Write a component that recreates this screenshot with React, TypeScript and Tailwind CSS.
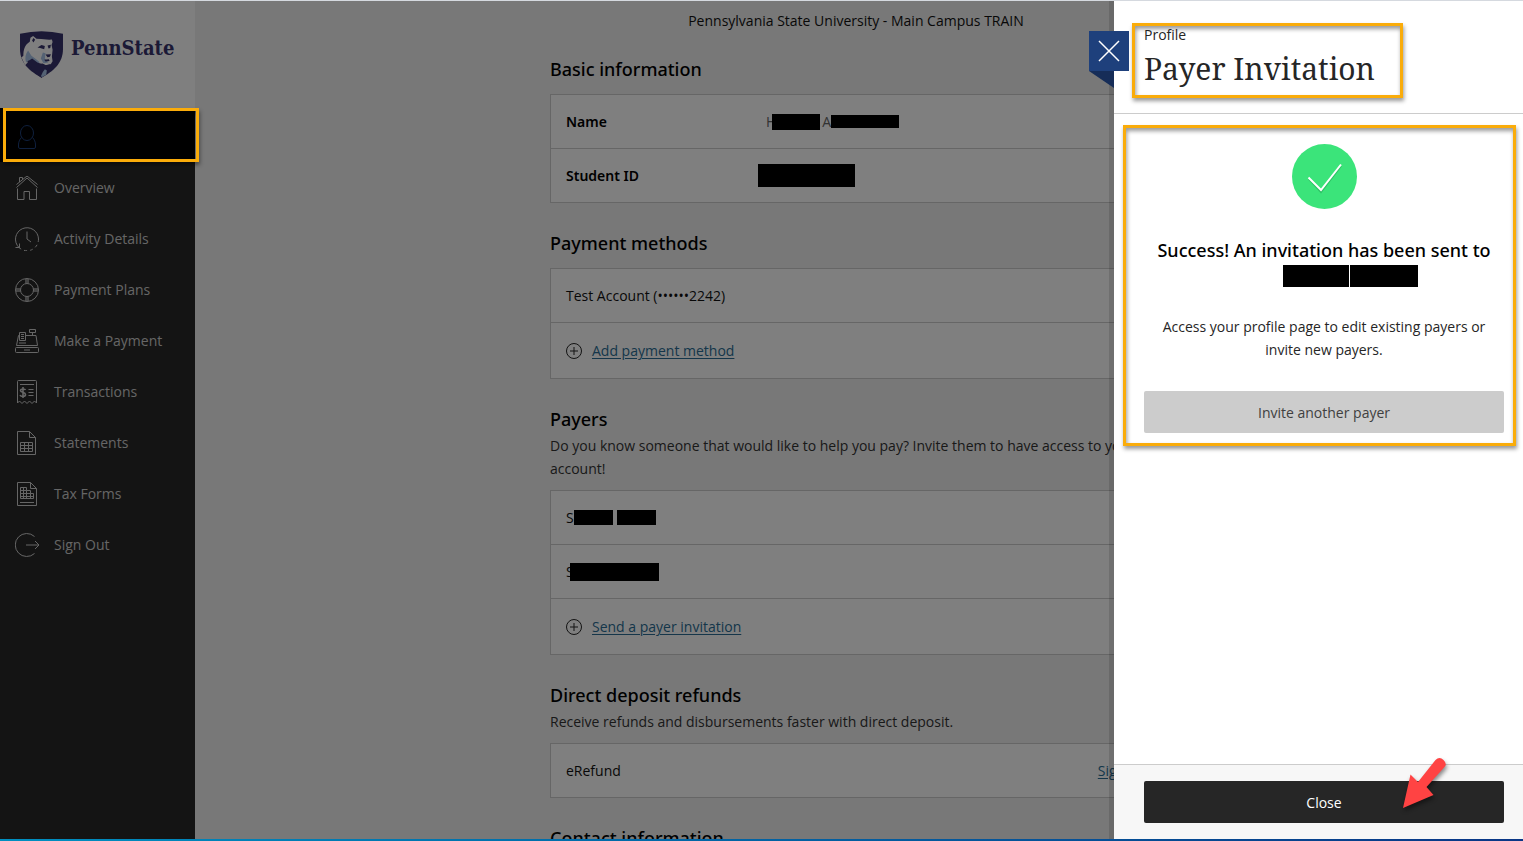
import type { ReactNode } from 'react';
import clsx from 'clsx';

const navItems = [
  { label: 'Overview', icon: <HomeIcon /> },
  { label: 'Activity Details', icon: <HistoryIcon /> },
  { label: 'Payment Plans', icon: <LifebuoyIcon /> },
  { label: 'Make a Payment', icon: <RegisterIcon /> },
  { label: 'Transactions', icon: <ReceiptIcon /> },
  { label: 'Statements', icon: <StatementIcon /> },
  { label: 'Tax Forms', icon: <TaxIcon /> },
  { label: 'Sign Out', icon: <SignOutIcon /> },
];

function Icon({ children, className }: { children: ReactNode; className?: string }) {
  return (
    <svg
      viewBox="0 0 24 24"
      className={clsx('size-6 shrink-0', className)}
      fill="none"
      stroke="currentColor"
      strokeWidth="1"
      aria-hidden="true"
    >
      {children}
    </svg>
  );
}

function UserIcon() {
  return (
    <Icon className="text-[#1e407c]">
      <ellipse cx="12" cy="8" rx="6.5" ry="7.5" />
      <path d="M6.5 12.5C4.500 14.500 3.500 17 3.500 20v2q0 1.500 1.500 1.500h14q1.500 0 1.500-1.500v-2c0-3-1-5.500-3-7.500" />
    </Icon>
  );
}

function HomeIcon() {
  return (
    <Icon>
      <path d="M2.500 12.500v11h6.500v-8h5.500v8h7v-11" />
      <path d="M1.500 11.500 12 2l10.500 9.500M1.500 8.500 12 0l10.500 8.500M4.500 6V1.500h3v2" />
    </Icon>
  );
}

function HistoryIcon() {
  return (
    <Icon>
      <path d="M4 20.500A11.500 11.500 0 1 1 23.500 12" />
      <path d="M23.500 12A11.500 11.500 0 0 1 4 20.500" strokeDasharray="3 3" />
      <path d="M.5 20.500h4v-4M12 4.500V12l4 3" />
    </Icon>
  );
}

function LifebuoyIcon() {
  return (
    <Icon>
      <circle cx="12" cy="12" r="11.5" />
      <circle cx="12" cy="12" r="6.5" />
      <path d="M12 1v4.500M12 18.500V23M1 12h4.500M18.500 12H23" strokeWidth="4" opacity="0.6" />
    </Icon>
  );
}

function RegisterIcon() {
  return (
    <Icon>
      <rect x=".5" y="18.500" width="23" height="5" rx="1" />
      <path d="M9 21h6M4 6.500H3.500L1.500 16.500h21l-1.500-10H11M4 14h7" />
      <path d="M4.500 11.500v-8h6v8zM6 5.500h3M6 7.500h3M6 9.500h3" />
      <path d="M14.500.5h6v3h-6zM17.500 3.500v3" />
    </Icon>
  );
}

function ReceiptIcon() {
  return (
    <Icon>
      <path d="M2.500 23V1.500q0-1 1-1h17q1 0 1 1V23l-2-2-2.500 2.500-2.500-2.500-2.500 2.500L9.500 21 7 23.500 4.500 21z" />
      <path d="M5 4.500h14M13.500 9.500h5M13.500 12.500h5M13.500 15.500h5" />
      <path d="M10.500 10C10 8.500 5.500 8.500 5.500 10.500s5 1.500 5 4-4.500 2.500-5.500.5M8 7v11" strokeWidth="1.6" />
    </Icon>
  );
}

function StatementIcon() {
  return (
    <Icon>
      <path d="M2.500.5h12l6 6v17h-18zM14.500.5v6h6" />
      <path d="M5.500 11.500h12v9h-12zM5.500 14.500h12M5.500 17.500h12M9.500 11.500v9M13.500 11.500v9" />
    </Icon>
  );
}

function TaxIcon() {
  return (
    <Icon>
      <path d="M2.500.5h13l6 6v17h-19zM15.500.5v6h6" />
      <path d="M5.500 5.500h6v3h4v3h3v5h-13zM5.500 8.500h6M5.500 11.500h10M5.500 14.500h13M8.500 5.500v11M11.500 8.500v8M15.500 11.500v5M5 20.500h14" />
    </Icon>
  );
}

function SignOutIcon() {
  return (
    <Icon>
      <path d="M19.500 3.500A11.500 11.500 0 1 0 19.500 20.500" />
      <path d="M11 12h12.500M20 8l4 4-4 4" />
    </Icon>
  );
}

function PennStateLogo() {
  return (
    <a href="#home" aria-label="PennState home" className="flex h-[107px] items-center gap-2 bg-white pl-5">
      <svg viewBox="0 0 128 140" className="h-[47px] w-[43px] shrink-0" aria-hidden="true">
        <path d="M0 8Q64-7 128 8v46c0 42-30 66-64 85C30 120 0 96 0 54z" fill="#36326c" />
        {/* lion */}
        <path d="M31 20l8-5 10 8 14 1 24 2 8-1 2 8-3 9 3 14-2 20 2 14-6 10-14 2-10-5-12 2-16-6-12-10-10 10-6-9c-3-22 1-42 18-52z" fill="#fff" />
        <path d="M4 78l9-6 10 22-8 8z" fill="#fff" />
        <path d="M24 58l10 16 14 10 10 8-2 8-18-8-12-4-8 6c-4-14-2-26 6-36zM68 64l8 2-2 16 10 12-14 2-8-14z" fill="#a8c4e8" />
        <path d="M24 90l12-8 16 12 24 8 16-4-8 20-20 21C44 126 30 110 24 90z" fill="#36326c" />
        <path d="M68 122l6-8 6 4-2 12-12 7-4-2z" fill="#a8c4e8" />
        <path d="M36 28l4-7 5 5-5 8zM52 49l12-7 10 3-2 9-12-3zM82 43l10-2-2 10-5 1zM76 70l16-1-3 8-7 1zM72 86l14-2 2 5-12 2z" fill="#36326c" />
      </svg>
      <span className="pb-3.5 font-['DejaVu_Serif_Condensed','DejaVu_Serif',serif] text-xl font-bold text-[#36326c]">
        PennState
      </span>
    </a>
  );
}

function Sidebar() {
  return (
    <nav className="w-[195px] shrink-0 bg-[#282828] text-[#cccccc]">
      <PennStateLogo />
      <a href="#profile" aria-label="Profile" className="flex h-[54px] items-center bg-black px-[15px] pt-1">
        <UserIcon />
      </a>
      <ul>
        {navItems.map((item) => (
          <li key={item.label}>
            <a href="#" className="flex h-[51px] items-center gap-[15px] px-[15px]">
              {item.icon}
              {item.label}
            </a>
          </li>
        ))}
      </ul>
    </nav>
  );
}

function Section({ title, description, children }: { title: string; description?: string; children?: ReactNode }) {
  return (
    <section>
      <h2 className="pb-0.5 font-['Noto_Sans',sans-serif] text-lg leading-[26px] font-medium text-black">{title}</h2>
      {description && <p>{description}</p>}
      {children && (
        <div className="mt-2.5 divide-y divide-[#cccccc] border border-[#cccccc] bg-white text-[#111111]">
          {children}
        </div>
      )}
    </section>
  );
}

function Row({ children }: { children: ReactNode }) {
  return <div className="flex items-center px-[15px] py-[15px]">{children}</div>;
}

function RowLabel({ children }: { children: ReactNode }) {
  return <span className="w-48 font-['Noto_Sans',sans-serif] font-semibold text-black">{children}</span>;
}

function AddLink({ children }: { children: ReactNode }) {
  return (
    <div className="flex items-center gap-2.5 px-[15px] py-4">
      <svg viewBox="0 0 16 16" className="size-4" fill="none" stroke="#262626" aria-hidden="true">
        <circle cx="8" cy="8" r="7.5" />
        <path d="M8 4v8M4 8h8" />
      </svg>
      <a href="#" className="text-[#2a6d94] underline underline-offset-2">
        {children}
      </a>
    </div>
  );
}

function ProfilePage() {
  return (
    <main className="min-w-0 flex-1 bg-[#f0f0f0] pt-2 pr-1.5 text-[#333333]">
      <div className="mx-auto max-w-[612px]">
        <p className="mb-6 text-center text-[#111111]">Pennsylvania State University - Main Campus TRAIN</p>
        <div className="flex flex-col gap-[27px]">
          <Section title="Basic information">
            <Row>
              <RowLabel>Name</RowLabel>
              <span className="flex items-center pl-2 text-[#666666]">
                H<span className="-ml-1 mr-0.5 h-4 w-12 bg-black" />A
                <span className="h-[13px] w-[68px] bg-black" />
              </span>
            </Row>
            <Row>
              <RowLabel>Student ID</RowLabel>
              <span className="h-[23px] w-[97px] bg-black" />
            </Row>
          </Section>
          <Section title="Payment methods">
            <Row>Test Account (••••••2242)</Row>
            <AddLink>Add payment method</AddLink>
          </Section>
          <Section
            title="Payers"
            description="Do you know someone that would like to help you pay? Invite them to have access to your account!"
          >
            <Row>
              S<span className="mr-1 h-[15px] w-[39px] bg-black" />
              <span className="h-[15px] w-[39px] bg-black" />
            </Row>
            <Row>
              S<span className="-ml-1 h-[18px] w-[89px] bg-black" />
            </Row>
            <AddLink>Send a payer invitation</AddLink>
          </Section>
          <Section title="Direct deposit refunds" description="Receive refunds and disbursements faster with direct deposit.">
            <Row>
              eRefund
              <a href="#" className="ml-auto text-[#2a6d94] underline underline-offset-2">
                Sign up
              </a>
            </Row>
          </Section>
          <Section title="Contact information" />
        </div>
      </div>
    </main>
  );
}

// amber callout frame, positioned by the caller
function Callout({ className }: { className: string }) {
  return (
    <div
      className={clsx(
        'pointer-events-none absolute border-3 border-[#faac0a] shadow-[1px_3px_4px_rgba(0,0,0,0.4),inset_1px_3px_4px_rgba(0,0,0,0.4)]',
        className,
      )}
    />
  );
}

function InvitationPanel() {
  return (
    <aside className="absolute inset-y-0 right-0 flex w-[409px] flex-col bg-white text-[#262626] shadow-[-5px_0_0_rgba(0,0,0,0.12)]">
      <button type="button" aria-label="Close panel" className="absolute top-[30px] -left-[25px] size-10 bg-[#1e407c]">
        <svg viewBox="0 0 40 40" className="size-10" stroke="#fff" strokeWidth="1.5" aria-hidden="true">
          <path d="M10 10l20 20M30 10L10 30" />
        </svg>
      </button>
      <svg viewBox="0 0 25 17" className="absolute top-[70px] -left-[25px] h-[17px] w-[25px]" aria-hidden="true">
        <path d="M0 0h25v17z" fill="#162d58" />
      </svg>

      <header className="border-b border-[#cccccc] pt-[22px] pr-[19px] pb-[25px] pl-[30px]">
        <p>Profile</p>
        <h1 className="mt-1 font-['Noto_Serif','DejaVu_Serif_Condensed',serif] text-3xl leading-[38px] font-normal">
          Payer Invitation
        </h1>
      </header>

      <div className="flex flex-1 flex-col items-center pt-[30px] pr-[19px] pl-[30px] text-center">
        <svg viewBox="0 0 65 65" className="size-[65px]" fill="none" aria-hidden="true">
          <circle cx="32.5" cy="32.5" r="32.5" fill="#3be47a" />
          <path d="M17 35l12 13 20-26" stroke="#1f9d50" strokeWidth="2" opacity="0.5" />
          <path d="M16.500 33.500l12.500 12.500 20-25.500" stroke="#fff" strokeWidth="2" />
        </svg>
        <h2 className="mt-7 pb-0.5 font-['Noto_Sans',sans-serif] text-lg leading-[26px] font-medium text-black">
          Success! An invitation has been sent to
        </h2>
        <div className="flex gap-px pl-[53px]">
          <span className="h-[22px] w-[66px] bg-black" />
          <span className="h-[22px] w-[68px] bg-black" />
        </div>
        <p className="mt-7 px-3">Access your profile page to edit existing payers or invite new payers.</p>
        <button type="button" className="mt-[30px] h-[42px] w-full rounded-xs bg-[#cccccc] text-[#404040]">
          Invite another payer
        </button>
      </div>

      <footer className="border-t border-[#cccccc] bg-[#f7f7f7] py-4 pr-[19px] pl-[30px]">
        <button type="button" className="h-[42px] w-full rounded-xs bg-[#262626] font-medium text-white">
          Close
        </button>
      </footer>

      <Callout className="top-[22px] left-[18px] h-[75px] w-[271px]" />
      <Callout className="top-[124px] left-[9px] h-[321px] w-[393px]" />
      <svg
        viewBox="0 0 44 52"
        className="absolute right-[77px] bottom-[30px] h-[52px] w-[44px] overflow-visible drop-shadow-[1px_3px_2px_rgba(0,0,0,0.45)]"
        aria-hidden="true"
      >
        <path d="M1 51 8.500 17.500l7.500 7.500L33.500 3q4-4 8 0t1 7L24.500 30l7 8z" fill="#ff4343" />
      </svg>
    </aside>
  );
}

export default function App() {
  return (
    <div className="flex h-screen flex-col font-['Open_Sans','Noto_Sans',sans-serif] text-sm leading-[23px]">
      <div className="h-px shrink-0 bg-[#d5d9df]" />
      <div className="relative min-h-0 flex-1 overflow-hidden">
        <div className="flex h-full">
          <Sidebar />
          <ProfilePage />
        </div>
        <div className="absolute inset-0 bg-black/50" />
        <Callout className="top-[107px] left-[3px] h-[54px] w-[196px]" />
        <InvitationPanel />
      </div>
      <div className="h-0.5 shrink-0 bg-linear-to-r from-[#008fc0] to-[#0a3686]" />
    </div>
  );
}
